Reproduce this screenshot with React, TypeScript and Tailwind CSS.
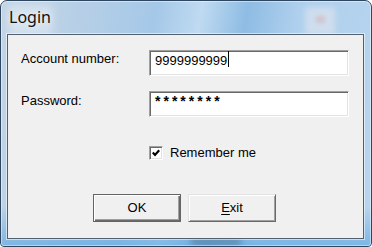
import React from 'react';

const ui = { fontFamily: '"Liberation Sans", Arial, sans-serif' };

function Field({ children }: { children?: React.ReactNode }) {
  return (
    <div className="w-[200px] h-[26px] bg-white border border-t-[#a0a0a0] border-l-[#a0a0a0] border-b-white border-r-white shadow-[inset_1px_1px_0_#696969,inset_-1px_-1px_0_#e3e3e3] pl-[5px] pt-[2px] flex items-start">
      {children}
    </div>
  );
}

function Button({ label, isDefault }: { label: React.ReactNode; isDefault?: boolean }) {
  const frame = isDefault
    ? 'border border-[#646464] shadow-[inset_1px_1px_0_#ffffff,inset_-1px_-1px_0_#696969,inset_-2px_-2px_0_#a0a0a0]'
    : 'border border-t-[#e3e3e3] border-l-[#e3e3e3] border-b-[#696969] border-r-[#696969] shadow-[inset_1px_1px_0_#ffffff,inset_-1px_-1px_0_#a0a0a0]';
  return (
    <div className={`w-[88px] h-[28px] bg-[#f0f0f0] flex items-center justify-center text-[13px] leading-[16px] text-black ${frame}`}>
      {label}
    </div>
  );
}

export default function App() {
  return (
    <div
      className="relative w-[372px] h-[247px] overflow-hidden rounded-t-[7px] rounded-b-[4px] border border-[#2f4660] flex flex-col bg-[linear-gradient(100deg,#c3d5e5_0%,#b8d0e6_18%,#a5c8e8_38%,#bfdaf1_49%,#8ebce3_60%,#aecfed_72%,#b8d5ee_100%)]"
      style={ui}
    >
      {/* glass blur behind the frame */}
      <div className="absolute left-[8px] top-[4px] w-[44px] h-[30px] bg-white/35 blur-[4px]" />
      <div className="absolute left-[304px] top-[6px] w-[30px] h-[28px] bg-[#e4e8ee]/60 blur-[3px]" />
      <div className="absolute left-[315px] top-[15px] w-[9px] h-[7px] bg-[#d89a9a]/40 blur-[2px]" />
      <div className="absolute left-0 bottom-0 w-full h-[40px] bg-[linear-gradient(180deg,rgba(110,170,225,0)_0%,rgba(100,168,225,0.7)_100%)]" />
      <div className="absolute left-[190px] bottom-[0px] w-[50px] h-[8px] bg-[#4d7391]/60 blur-[3px]" />
      <div className="absolute inset-0 rounded-t-[6px] rounded-b-[3px] shadow-[inset_0_0_0_1px_rgba(255,255,255,0.45)]" />

      <div className="relative h-[33px] shrink-0 pl-[8px] pt-[5px]">
        <span
          className="text-[16px] leading-[20px] text-[#111] [text-shadow:0_0_6px_rgba(255,255,255,0.9)]"
          style={{ fontFamily: '"Noto Sans", "Open Sans", sans-serif' }}
        >
          Login
        </span>
      </div>

      <div className="relative ml-[6px] w-[357px] h-[205px] shrink-0 bg-[#f0f0f0] border border-[#52606e] shadow-[0_0_0_1px_rgba(255,255,255,0.55)] flex flex-col text-[13px] leading-[16px] text-black">
        <div className="flex items-start mt-[15px] pl-[13px]">
          <div className="w-[128px] pt-[1px]">Account number:</div>
          <Field>
            <span>9999999999</span>
            <span className="w-px h-[16px] bg-black ml-[1px] -mt-[2px]" />
          </Field>
        </div>

        <div className="flex items-start mt-[15px] pl-[13px]">
          <div className="w-[128px] pt-[2px]">Password:</div>
          <Field>
            <span className="tracking-[3px] text-[14px] leading-[14px] font-bold">********</span>
          </Field>
        </div>

        <div className="flex items-center mt-[28px] pl-[141px] h-[16px]">
          <div className="w-[14px] h-[14px] bg-white border border-t-[#a0a0a0] border-l-[#a0a0a0] border-b-white border-r-white shadow-[inset_1px_1px_0_#696969,inset_-1px_-1px_0_#e3e3e3] flex items-center justify-center">
            <svg width="8" height="8" viewBox="0 0 8 8">
              <polyline points="0.8,3.6 3,5.9 7.2,1.3" fill="none" stroke="#000" strokeWidth="2.2" />
            </svg>
          </div>
          <span className="ml-[7px]">Remember me</span>
        </div>

        <div className="flex mt-[33px] pl-[85px] gap-[7px]">
          <Button label="OK" isDefault />
          <Button
            label={
              <span>
                <span className="underline underline-offset-2">E</span>xit
              </span>
            }
          />
        </div>
      </div>
    </div>
  );
}
